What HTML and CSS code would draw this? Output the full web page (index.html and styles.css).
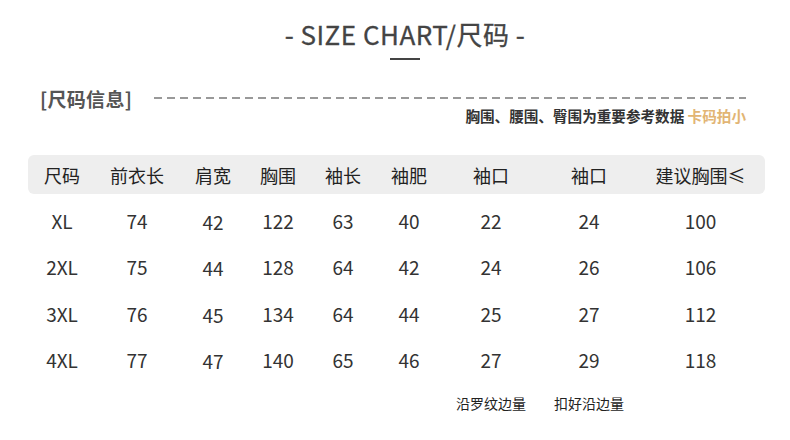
FILE: index.html
```html
<!DOCTYPE html>
<html>
<head>
<meta charset="utf-8">
<link rel="stylesheet" href="styles.css">
</head>
<body>
<div class="page">
  <div class="title">- SIZE CHART/尺码 -</div>
  <div class="title-line"></div>
  <div class="info">
    <span class="info-label">[尺码信息]</span>
    <span class="info-dash"></span>
  </div>
  <div class="note">胸围、腰围、臀围为重要参考数据 <span class="accent">卡码拍小</span></div>
  <div class="table">
    <div class="row head">
      <span>尺码</span><span>前衣长</span><span>肩宽</span><span>胸围</span><span>袖长</span><span>袖肥</span><span>袖口</span><span>袖口</span><span>建议胸围≤</span>
    </div>
    <div class="row data">
      <span>XL</span><span>74</span><span>42</span><span>122</span><span>63</span><span>40</span><span>22</span><span>24</span><span>100</span>
    </div>
    <div class="row data">
      <span>2XL</span><span>75</span><span>44</span><span>128</span><span>64</span><span>42</span><span>24</span><span>26</span><span>106</span>
    </div>
    <div class="row data">
      <span>3XL</span><span>76</span><span>45</span><span>134</span><span>64</span><span>44</span><span>25</span><span>27</span><span>112</span>
    </div>
    <div class="row data">
      <span>4XL</span><span>77</span><span>47</span><span>140</span><span>65</span><span>46</span><span>27</span><span>29</span><span>118</span>
    </div>
    <div class="row foot">
      <span></span><span></span><span></span><span></span><span></span><span></span><span>沿罗纹边量</span><span>扣好沿边量</span><span></span>
    </div>
  </div>
</div>
</body>
</html>
```
FILE: styles.css
```css
html, body {
  margin: 0;
  padding: 0;
  background: #fff;
}
body {
  font-family: "Noto Sans CJK SC", "Noto Sans", sans-serif;
  color: #333;
}
.page {
  width: 790px;
  height: 440px;
  overflow: hidden;
}
.title {
  margin-top: 15px;
  text-align: center;
  font-size: 26px;
  line-height: 38px;
  color: #444;
  letter-spacing: 0.5px;
  padding-left: 20px;
  -webkit-text-stroke: 0.3px #444;
}
.title-line {
  width: 30px;
  height: 2px;
  background: #444;
  margin: 5px 0 0 390px;
}
.info {
  display: flex;
  align-items: center;
  margin: 26px 0 0 40px;
  width: 706px;
  height: 24px;
}
.info-label {
  font-size: 19px;
  font-weight: 700;
  color: #555;
  letter-spacing: 0.3px;
}
.info-dash {
  flex: 1;
  margin-left: 22px;
  height: 2px;
  background: repeating-linear-gradient(90deg, #999 0 8px, transparent 8px 13px);
}
.note {
  width: 746px;
  text-align: right;
  font-size: 14.6px;
  font-weight: 700;
  color: #333;
  line-height: 20px;
  margin-top: -4px;
}
.accent {
  color: #e2b574;
}
.table {
  margin: 29px 0 0 28px;
  width: 737px;
}
.row {
  display: grid;
  grid-template-columns: 68px 82px 70px 60px 70px 62px 102px 94px 129px;
  height: 46.5px;
  align-items: center;
  font-size: 19px;
  color: #333;
}
.row span {
  text-align: center;
}
.data span:nth-child(3) {
  padding-top: 2px;
}
.row.head {
  height: 39px;
  background: #eeeeee;
  border-radius: 6px;
  color: #222;
  font-size: 18px;
  margin-bottom: 3px;
}
.row.foot {
  font-size: 14px;
  height: 40px;
  color: #222;
}
```
